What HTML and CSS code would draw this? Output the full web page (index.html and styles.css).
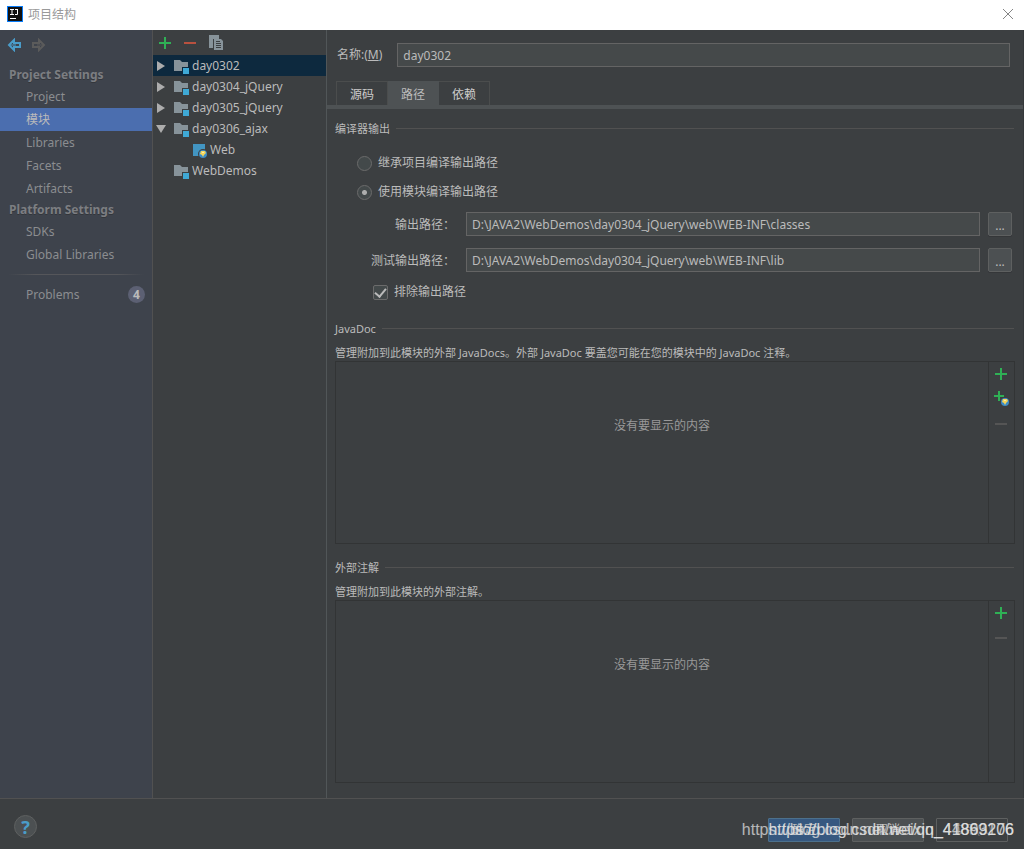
FILE: index.html
```
<!DOCTYPE html>
<html lang="zh-CN">
<head>
<meta charset="utf-8">
<title>项目结构</title>
<link rel="stylesheet" href="styles.css">
</head>
<body>
<svg class="defs" width="0" height="0" aria-hidden="true">
  <symbol id="module" viewBox="0 0 16 16"><path fill="#87939a" d="M1 2h6l2 2h6v5H9v4H1z"/><path fill="#3fa9d6" d="M10 10h6v6h-6z"/></symbol>
  <symbol id="right" viewBox="0 0 10 10"><path fill="#adadad" d="M1 0v10l8-5z"/></symbol>
  <symbol id="down" viewBox="0 0 10 10"><path fill="#adadad" d="M0 1h10L5 9z"/></symbol>
  <symbol id="plus" viewBox="0 0 16 16"><path fill="#2fb055" d="M7 2h2v5h5v2H9v5H7V9H2V7h5z"/></symbol>
  <symbol id="minus" viewBox="0 0 16 16"><path fill="currentColor" d="M2 7h12v2H2z"/></symbol>
  <symbol id="arrow" viewBox="0 0 14 14"><path fill="none" stroke="currentColor" stroke-width="2" d="M7 2 2 7l5 5V9h6V5H7z"/><path stroke="currentColor" d="M3 7h6"/></symbol>
  <symbol id="globe" viewBox="0 0 8 8"><circle cx="4" cy="4" r="4" fill="#3d8cc6"/><path fill="#f5d65b" d="M2 1h4l1 2-2 2-1 2-1-2-2-1z"/><path fill="#fff0a8" d="M3 2h2v1H3z"/></symbol>
</svg>
<header class="titlebar">
  <svg class="logo" width="16" height="16" viewBox="0 0 16 16" aria-hidden="true"><path fill="#087cfa" d="M0 0h16v16H0z"/><path fill="#111" d="M1 1h14v14H1z"/><path fill="none" stroke="#fff" d="M3 3.500h4M5 3v5M3 8.500h4M8 3.500h3M10.500 3v5.500H8M3 12.500h6"/></svg>
  <h1 class="title">项目结构</h1>
  <button class="close" aria-label="关闭"><svg width="12" height="12" viewBox="0 0 12 12"><path stroke="#858585" d="m1 1 10 10M11 1 1 11"/></svg></button>
</header>
<div class="window">
  <nav class="sidebar">
    <div class="history">
      <button class="tool back" aria-label="后退"><svg width="14" height="14"><use href="#arrow"/></svg></button>
      <button class="tool forward" aria-label="前进"><svg width="14" height="14"><use href="#arrow"/></svg></button>
    </div>
    <h2 class="group">Project Settings</h2>
    <a class="item" href="#">Project</a>
    <a class="item active" href="#">模块</a>
    <a class="item" href="#">Libraries</a>
    <a class="item" href="#">Facets</a>
    <a class="item" href="#">Artifacts</a>
    <h2 class="group">Platform Settings</h2>
    <a class="item" href="#">SDKs</a>
    <a class="item" href="#">Global Libraries</a>
    <hr class="divider">
    <a class="item" href="#">Problems<span class="badge">4</span></a>
  </nav>
  <section class="modules">
    <div class="toolbar">
      <button class="tool" aria-label="添加"><svg width="16" height="16"><use href="#plus"/></svg></button>
      <button class="tool remove" aria-label="移除"><svg width="16" height="16"><use href="#minus"/></svg></button>
      <button class="tool" aria-label="复制"><svg width="16" height="16" viewBox="0 0 16 16"><path fill="#87939a" d="M1 0h10v4H5v9H1z"/><path fill="#87939a" d="M6 4h7l2 2v9H6z"/><path stroke="#3c3f41" d="M8 6.500h4M8 8.500h5M8 10.500h5M8 12.500h5"/></svg></button>
    </div>
    <ul class="tree">
      <li class="node selected"><svg class="toggle"><use href="#right"/></svg><svg class="kind"><use href="#module"/></svg>day0302</li>
      <li class="node"><svg class="toggle"><use href="#right"/></svg><svg class="kind"><use href="#module"/></svg>day0304_jQuery</li>
      <li class="node"><svg class="toggle"><use href="#right"/></svg><svg class="kind"><use href="#module"/></svg>day0305_jQuery</li>
      <li class="node"><svg class="toggle"><use href="#down"/></svg><svg class="kind"><use href="#module"/></svg>day0306_ajax</li>
      <li class="node child"><svg class="kind" viewBox="0 0 16 16"><path fill="#4295c2" d="M2 2h12v12H2z"/><circle cx="12" cy="12" r="5" fill="#3c3f41"/><use href="#globe" x="8" y="8" width="8" height="8"/></svg>Web</li>
      <li class="node"><span class="toggle"></span><svg class="kind"><use href="#module"/></svg>WebDemos</li>
    </ul>
  </section>
  <main class="detail">
    <div class="name-row">
      <label for="name">名称:(<u>M</u>)</label>
      <input class="field" id="name" value="day0302">
    </div>
    <div class="tabs" role="tablist">
      <button class="tab" role="tab">源码</button>
      <button class="tab current" role="tab" aria-selected="true">路径</button>
      <button class="tab" role="tab">依赖</button>
    </div>
    <div class="content">
      <h3 class="section">编译器输出</h3>
      <div class="output">
        <label class="choice"><input type="radio" name="out">继承项目编译输出路径</label>
        <label class="choice"><input type="radio" name="out" checked>使用模块编译输出路径</label>
        <div class="paths">
          <label for="out-path">输出路径<span class="colon">：</span></label>
          <input class="field" id="out-path" value="D:\JAVA2\WebDemos\day0304_jQuery\web\WEB-INF\classes">
          <button class="browse" aria-label="浏览输出路径">...</button>
          <label for="test-path">测试输出路径<span class="colon">：</span></label>
          <input class="field" id="test-path" value="D:\JAVA2\WebDemos\day0304_jQuery\web\WEB-INF\lib">
          <button class="browse" aria-label="浏览测试输出路径">...</button>
        </div>
        <label class="choice exclude"><input type="checkbox" checked>排除输出路径</label>
      </div>
      <h3 class="section">JavaDoc</h3>
      <p class="hint">管理附加到此模块的外部 JavaDocs。外部 JavaDoc 要盖您可能在您的模块中的 JavaDoc 注释。</p>
      <div class="list">
        <div class="empty">没有要显示的内容</div>
        <div class="actions">
          <button class="tool" aria-label="添加"><svg width="16" height="16"><use href="#plus"/></svg></button>
          <button class="tool" aria-label="添加网址"><svg width="16" height="16" viewBox="0 0 16 16"><path fill="#2fb055" d="M5 0h2v4h4v2H7v4H5V6H1V4h4z"/><use href="#globe" x="8" y="7" width="8" height="8"/></svg></button>
          <button class="tool off" aria-label="移除"><svg width="16" height="16"><use href="#minus"/></svg></button>
        </div>
      </div>
      <h3 class="section">外部注解</h3>
      <p class="hint">管理附加到此模块的外部注解。</p>
      <div class="list">
        <div class="empty">没有要显示的内容</div>
        <div class="actions">
          <button class="tool" aria-label="添加"><svg width="16" height="16"><use href="#plus"/></svg></button>
          <button class="tool off" aria-label="移除"><svg width="16" height="16"><use href="#minus"/></svg></button>
        </div>
      </div>
    </div>
  </main>
</div>
<footer class="footer">
  <button class="help" aria-label="帮助">?</button>
  <div class="buttons">
    <button class="btn primary">确定</button>
    <button class="btn">取消</button>
    <button class="btn disabled" disabled>应用(A)</button>
  </div>
  <span class="mark faint">https://blog.csdn.net/weixin_44893176</span>
  <span class="mark">https://blog.csdn.net/qq_41869206</span>
</footer>
</body>
</html>
```
FILE: styles.css
```
* { box-sizing: border-box; }
body {
  margin: 0;
  min-height: 100vh;
  display: flex;
  flex-direction: column;
  background: #3c3f41;
  color: #bbb;
  font: 12px/16px "Noto Sans", "Noto Sans CJK SC", sans-serif;
}
button, input { font: inherit; color: inherit; margin: 0; }
h1, h2, h3, p, ul { margin: 0; padding: 0; font-size: 12px; font-weight: 400; list-style: none; }
svg { display: block; flex: none; }
.defs { position: absolute; }

.titlebar { display: flex; align-items: center; height: 30px; padding: 0 10px 2px 7px; background: #fff; }
.title { flex: 1; margin-left: 5px; padding-top: 2px; color: #999; }
.close { padding: 0; border: 0; background: none; }

.window { flex: 1; display: flex; }
.tool { display: block; padding: 0; border: 0; background: none; }

.sidebar { flex: none; width: 153px; background: #3e434c; border-right: 1px solid #515151; }
.history { display: flex; align-items: flex-start; gap: 11px; height: 35px; padding: 8px 7px; }
.back { color: #4a9cc9; }
.forward { color: #5b5b5b; }
.forward svg { transform: scaleX(-1); }
.group { height: 20px; padding-left: 9px; line-height: 20px; font-weight: 700; color: #7c7e82; text-shadow: 0 1px #33363b; }
.item { display: flex; align-items: center; justify-content: space-between; height: 23px; padding: 0 7px 0 26px; color: #8b8d90; text-decoration: none; }
.item.active { background: #4b6eaf; color: #bbb; }
.divider { height: 1px; margin: 8px; border: 0; background: linear-gradient(90deg, transparent, #55565a 20%, #55565a 80%, transparent); }
.badge { width: 17px; height: 17px; border-radius: 50%; background: #5c6073; color: #bbb; font-weight: 700; line-height: 17px; text-align: center; }

.modules { flex: none; width: 174px; border-right: 1px solid #515658; }
.toolbar { display: flex; gap: 9px; height: 25px; padding: 4px; }
.remove { color: #b9513f; }
.toolbar .tool:last-child { padding-left: 1px; }
.node { display: flex; align-items: center; height: 21px; padding-left: 3px; }
.node.selected { background: #0d293e; }
.node.child { padding-left: 38px; }
.toggle { width: 10px; height: 10px; margin-right: 7px; }
.kind { width: 16px; height: 16px; margin-right: 3px; }

.detail { flex: 1; min-width: 0; display: flex; flex-direction: column; border-right: 1px solid #35383a; }
.name-row { display: flex; align-items: center; gap: 15px; padding: 13px 13px 14px 10px; }
.name-row label { flex: none; }
.field { flex: 1; min-width: 0; height: 24px; padding: 0 5px; border: 1px solid #646464; background: #45494a; }
.tabs { display: flex; height: 28px; padding-left: 9px; border-bottom: 4px solid #4e5254; }
.tab { width: 51px; height: 24px; padding: 2px 0 0; border: 1px solid #4b4d4d; border-bottom: 0; border-left-width: 0; background: #3c3f41; color: #ccc; }
.tab:first-child { border-left-width: 1px; width: 52px; }
.tab.current { background: #4e5254; border-color: #4e5254; color: #bbb; }

.content { flex: 1; display: flex; flex-direction: column; padding: 12px 8px 15px; }
.section { display: flex; align-items: center; gap: 6px; height: 16px; margin-right: 1px; font-size: 11px; }
.section::after { content: ""; flex: 1; height: 1px; background: #515151; margin-bottom: 2px; }
.output { padding: 14px 3px 0 22px; }
.choice { display: flex; align-items: center; gap: 6px; height: 24px; margin-bottom: 5px; }
.choice input { appearance: none; width: 15px; height: 15px; border: 1px solid #6b6b6b; background: #43494a; }
.choice input[type="radio"] { border-radius: 50%; }
.choice input[type="radio"]:checked { background: radial-gradient(circle, #adadad 2px, #43494a 3px); }
.choice input[type="checkbox"] { display: grid; place-items: center; border-radius: 2px; }
.choice input[type="checkbox"]:checked::after { content: ""; width: 5px; height: 9px; border: solid #bbb; border-width: 0 2px 2px 0; transform: rotate(40deg); margin-bottom: 3px; }
.paths { display: grid; grid-template-columns: 101px 1fr 24px; gap: 12px 8px; align-items: center; margin-top: 8px; }
.paths label { padding-right: 3px; text-align: right; white-space: nowrap; }
.colon { font-family: "Noto Sans CJK TC", sans-serif; }
.browse { width: 24px; height: 24px; padding: 3px 0 0; border: 1px solid #5e6060; border-radius: 2px; background: #4c5052; box-shadow: 0 1px #353739; }
.exclude { margin: 8px 0 17px 16px; }
.hint { height: 16px; margin-top: 8px; font-size: 11px; white-space: nowrap; }
.list { flex: 1 1 160px; display: flex; border: 1px solid #323435; margin-bottom: 16px; }
.list:last-child { margin-bottom: 0; }
.empty { flex: 1; padding-top: 56px; text-align: center; color: #999; }
.actions { width: 26px; padding: 4px; border-left: 1px solid #323435; display: flex; flex-direction: column; gap: 9px; }
.off { color: #555; }

.footer { flex: none; position: relative; display: flex; align-items: center; justify-content: space-between; height: 51px; padding: 5px 16px 0 14px; border-top: 1px solid #515151; }
.help { width: 23px; height: 23px; padding: 0; border: 1px solid #5e6060; border-radius: 50%; background: #4c5052; color: #4a9cc9; font-size: 18px; font-weight: 700; line-height: 20px; }
.buttons { display: flex; gap: 12px; padding-top: 7px; }
.btn { width: 72px; height: 24px; padding: 0; border: 1px solid #5e6060; background: #4c5052; border-radius: 1px; }
.primary { background: #365880; border-color: #4c708c; }
.disabled { background: none; color: #777; }
.mark { position: absolute; right: 10px; top: 22px; font: 16px/18px "Liberation Sans", Arial, sans-serif; color: #e0e0e0; opacity: 0.9; }
.faint { opacity: 0.75; }
```
